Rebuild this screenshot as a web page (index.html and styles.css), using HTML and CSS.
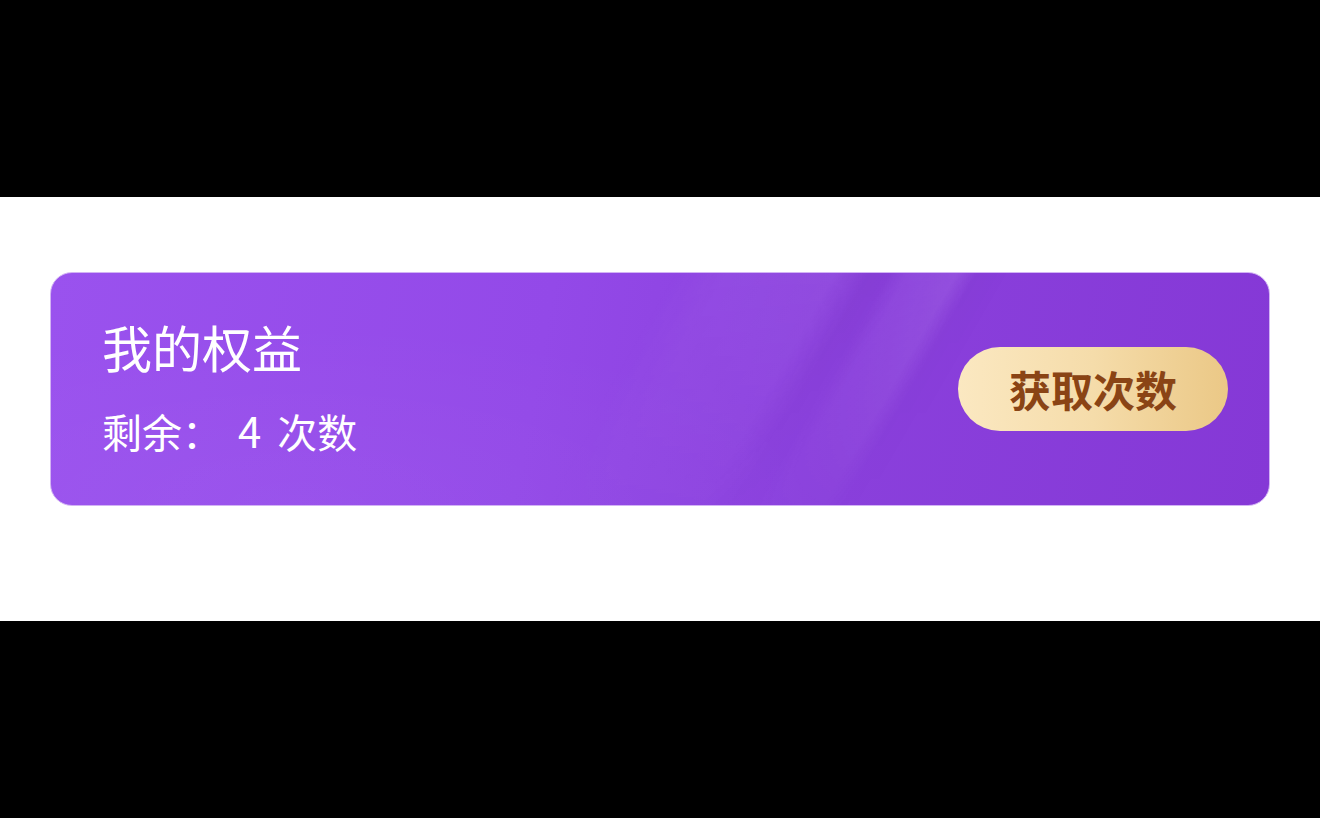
FILE: index.html
```html
<!DOCTYPE html>
<html lang="zh-CN">
<head>
<meta charset="utf-8">
<title>我的权益</title>
<link rel="stylesheet" href="styles.css">
</head>
<body>
<div class="band"></div>
<main class="stage">
  <section class="card">
    <div class="info">
      <h1 class="title">我的权益</h1>
      <p class="remain">剩余：<span class="num">4</span><span class="unit">次数</span></p>
    </div>
    <button class="get-btn" type="button">获取次数</button>
  </section>
</main>
<div class="band"></div>
</body>
</html>
```
FILE: styles.css
```css
html, body {
  margin: 0;
  padding: 0;
  background: #000;
}
body {
  font-family: "Noto Sans CJK SC", "Noto Sans", sans-serif;
  width: 1320px;
  height: 818px;
  overflow: hidden;
}
.band {
  height: 197px;
  background: #000;
}
.stage {
  height: 424px;
  background: #fff;
  padding: 75px 50px 0 50px;
  box-sizing: border-box;
}
.card {
  position: relative;
  overflow: hidden;
  height: 234px;
  box-sizing: border-box;
  border-radius: 22px;
  border: 1px solid #d2b3f4;
  background:
    radial-gradient(ellipse 45% 80% at 20% 100%, rgba(255,255,255,0.035), rgba(255,255,255,0)),
    linear-gradient(100deg, #9a52ee 0%, #9349e8 40%, #8a40dc 65%, #8538d6 100%);
  display: flex;
  align-items: center;
  justify-content: space-between;
  padding: 0 41px 0 51px;
}
.card::before {
  content: "";
  position: absolute;
  inset: 0;
  background: linear-gradient(120deg,
    rgba(255,255,255,0) 46%,
    rgba(255,255,255,0.04) 50%,
    rgba(255,255,255,0.06) 58%,
    rgba(0,0,0,0.03) 60.5%,
    rgba(0,0,0,0.02) 62%,
    rgba(255,255,255,0.05) 63.5%,
    rgba(255,255,255,0.09) 67%,
    rgba(0,0,0,0.015) 68.5%,
    rgba(255,255,255,0) 71%);
  -webkit-mask-image: linear-gradient(to bottom, #000 0%, rgba(0,0,0,0.55) 55%, rgba(0,0,0,0.15) 100%);
  mask-image: linear-gradient(to bottom, #000 0%, rgba(0,0,0,0.55) 55%, rgba(0,0,0,0.15) 100%);
  pointer-events: none;
}
.info, .get-btn {
  position: relative;
  z-index: 1;
}
.info {
  display: flex;
  flex-direction: column;
  gap: 30px;
  color: #fff;
  margin-top: -8px;
}
.title {
  margin: 0;
  font-size: 50px;
  font-weight: 400;
  line-height: 60px;
}
.remain {
  margin: 0;
  font-size: 40px;
  font-weight: 400;
  line-height: 48px;
}
.num {
  font-size: 42px;
  margin-left: 16px;
}
.unit {
  margin-left: 16px;
}
.get-btn {
  width: 270px;
  height: 84px;
  border: none;
  border-radius: 42px;
  background: linear-gradient(90deg, #fbe8c1 0%, #f5dcaa 50%, #ebc886 100%);
  color: #8a4415;
  font-family: "Noto Sans CJK SC", "Noto Sans", sans-serif;
  font-size: 42px;
  font-weight: 700;
  padding: 0;
  line-height: 84px;
}
```
